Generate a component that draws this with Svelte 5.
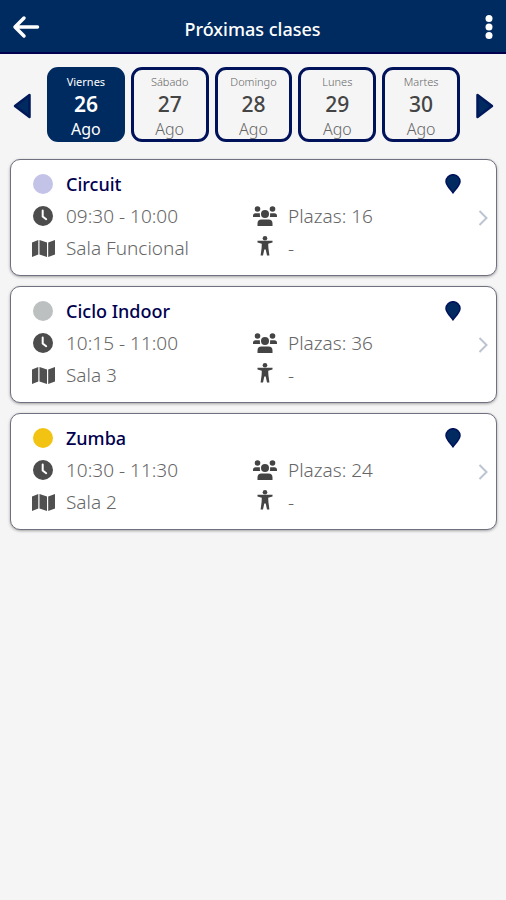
<script>
let days = $state([
     { name: "Viernes", num: 26, month: "Ago" },
     { name: "Sábado", num: 27, month: "Ago" },
     { name: "Domingo", num: 28, month: "Ago" },
     { name: "Lunes", num: 29, month: "Ago" },
     { name: "Martes", num: 30, month: "Ago" }
])

let selected = $state(0)

let classes = [
     { name: "Circuit", color: "#c3c3e8", time: "09:30 - 10:00", room: "Sala Funcional", places: 16, coach: "-" },
     { name: "Ciclo Indoor", color: "#bdc0c0", time: "10:15 - 11:00", room: "Sala 3", places: 36, coach: "-" },
     { name: "Zumba", color: "#f3c313", time: "10:30 - 11:30", room: "Sala 2", places: 24, coach: "-" }
]

function prevDay(){
     if(selected > 0){
          selected--
     }
}

function nextDay(){
     if(selected < days.length - 1){
          selected++
     }
}
</script>

<header>
     <button class="iconButton" type="button" aria-label="Volver">
          <svg width="28" height="24" viewBox="0 0 28 24" fill="none" stroke="#fff" stroke-width="3.500" stroke-linecap="round" stroke-linejoin="round"><path d="M12 3 3 12l9 9M4 12h21.500"/></svg>
     </button>
     <h1>Próximas clases</h1>
     <button class="iconButton menuButton" type="button" aria-label="Menú">
          <svg width="8" height="26" viewBox="0 0 8 26" fill="#fff"><circle cx="4" cy="4.500" r="3.500"/><circle cx="4" cy="13" r="3.500"/><circle cx="4" cy="21.500" r="3.500"/></svg>
     </button>
</header>

<nav class="days">
     <button class="arrow" type="button" aria-label="Día anterior" onclick={() => prevDay()}>
          <svg width="18" height="26" viewBox="0 0 18 26"><path d="M16.500 2v22L2 13z" fill="#002a60" stroke="#00195a" stroke-width="2.500" stroke-linejoin="round"/></svg>
     </button>
     {#each days as day, index}
     <button class={index == selected ? "day dayOn" : "day"} type="button" onclick={() => selected = index}>
          <span class="dayName">{day.name}</span>
          <span class="dayNum">{day.num}</span>
          <span class="dayMonth">{day.month}</span>
     </button>
     {/each}
     <button class="arrow" type="button" aria-label="Día siguiente" onclick={() => nextDay()}>
          <svg width="18" height="26" viewBox="0 0 18 26"><path d="M1.500 2v22L16 13z" fill="#002a60" stroke="#00195a" stroke-width="2.500" stroke-linejoin="round"/></svg>
     </button>
</nav>

<main>
     {#each classes as item}
     <article class="card">
          <div class="info">
               <div class="row">
                    <span class="icon"><span class="dot" style:background-color={item.color}></span></span>
                    <h2>{item.name}</h2>
               </div>
               <div class="row pinRow">
                    <svg width="16" height="20" viewBox="0 0 16 20"><path d="M8 19C6.500 16.300 1 11.500 1 7.500a7 6.800 0 0 1 14 0C15 11.500 9.500 16.300 8 19z" fill="#002a60" stroke="#00125a" stroke-width="1.500" stroke-linejoin="round"/></svg>
               </div>
               <div class="row">
                    <span class="icon">
                         <svg width="20" height="20" viewBox="0 0 20 20"><circle cx="10" cy="10" r="10" fill="#4c4c4c"/><path d="M9.700 4.500v6l3.500 2.700" fill="none" stroke="#fff" stroke-width="2" stroke-linecap="round"/></svg>
                    </span>
                    <span>{item.time}</span>
               </div>
               <div class="row">
                    <span class="icon">
                         <svg width="26" height="20" viewBox="0 0 26 20" fill="#444"><circle cx="5.500" cy="3" r="2.800"/><circle cx="20.500" cy="3" r="2.800"/><circle cx="13" cy="8" r="4"/><path d="M1 11V9.800Q1 7.200 3.600 7.200h3.300q.7 0 1.200.3Q7.600 9.200 8.200 11zM25 11V9.800q0-2.600-2.600-2.600h-3.300q-.7 0-1.200.3.500 1.700-.1 3.500zM5.500 20v-2.500q0-4 4-4h7q4 0 4 4V20z"/></svg>
                    </span>
                    <span>Plazas: {item.places}</span>
               </div>
               <div class="row">
                    <span class="icon">
                         <svg width="23" height="19" viewBox="0 0 23 19" fill="#505050"><path d="M0 3.500 6.300 1v14.500L0 18zM7.500 1l7.500 2.500V18l-7.500-2.500zM16.200 3.500 23 1v14.500L16.200 18z"/></svg>
                    </span>
                    <span>{item.room}</span>
               </div>
               <div class="row">
                    <span class="icon person">
                         <svg width="16" height="20" viewBox="0 0 16 20" fill="#444"><circle cx="8" cy="2.300" r="2.300"/><path d="M.5 4.800h15v1.700l-4.300 1.300.2 4.200 1 7.500H10l-1.300-6H7.300l-1.300 6H3.600l1-7.500.2-4.200L.5 6.500z"/></svg>
                    </span>
                    <span>{item.coach}</span>
               </div>
          </div>
          <button class="more" type="button" aria-label="Ver {item.name}">
               <svg width="10" height="16" viewBox="0 0 10 16" fill="none" stroke="#bcc4d2" stroke-width="2"><path d="m1.500 1 7 7-7 7"/></svg>
          </button>
     </article>
     {/each}
</main>

<style>
     :global(body){
          background-color: #f5f5f5;
          font-family: "Noto Sans", "Open Sans", sans-serif;
          color: #666;
     }

     button{
          margin: 0;
          padding: 0;
          border: none;
          background: none;
          font-family: inherit;
          color: inherit;
          cursor: pointer;
     }

     svg{
          display: block;
     }

     header{
          display: flex;
          align-items: center;
          justify-content: space-between;
          padding: 14px 13px 12px 12px;
          background-color: #002b60;
          border-bottom: 2px solid #00004f;
     }

     h1{
          margin: 0;
          padding-top: 4px;
          color: #fff;
          font-size: 18px;
          font-weight: 500;
          line-height: 22px;
     }

     .iconButton{
          display: flex;
          width: 28px;
     }

     .menuButton{
          justify-content: flex-end;
     }

     .days{
          display: flex;
          align-items: center;
          gap: 6px;
          padding: 13px 12px 17px 13px;
     }

     .arrow{
          flex: none;
          width: 28px;
          padding-top: 3px;
     }

     .arrow:last-child{
          display: flex;
          justify-content: flex-end;
     }

     .day{
          flex: 1;
          display: flex;
          flex-direction: column;
          align-items: center;
          height: 75px;
          box-sizing: border-box;
          padding-top: 3px;
          border: 3px solid #00125a;
          border-radius: 11px;
     }

     .dayOn{
          background-color: #002b60;
          border-color: #002b60;
          color: #fff;
     }

     .dayName{
          font-size: 11px;
          font-weight: 300;
          line-height: 17px;
     }

     .dayNum{
          font-size: 21px;
          font-weight: 500;
          line-height: 28px;
          color: #444;
     }

     .dayMonth{
          font-size: 16px;
          font-weight: 300;
          line-height: 22px;
     }

     .dayOn .dayName,
     .dayOn .dayMonth{
          font-weight: 400;
     }

     .dayOn .dayNum{
          color: #fff;
          font-weight: 600;
     }

     main{
          display: flex;
          flex-direction: column;
          gap: 10px;
          padding: 0 9px 10px 10px;
     }

     .card{
          display: flex;
          align-items: center;
          padding: 8px 8px 11px 19px;
          background-color: #fff;
          border: 1px solid #6f7080;
          border-radius: 10px;
          box-shadow: 0 1px 3px rgba(0, 0, 0, 0.35);
     }

     .info{
          flex: 1;
          display: grid;
          grid-template-columns: 1fr 1fr;
     }

     .row{
          display: flex;
          align-items: center;
          gap: 10px;
          height: 32px;
          font-size: 19px;
          font-weight: 300;
     }

     .pinRow{
          justify-content: flex-end;
          padding-right: 13px;
     }

     .icon{
          display: flex;
          justify-content: center;
          width: 26px;
     }

     .dot{
          width: 20px;
          height: 20px;
          border-radius: 50%;
     }

     .person{
          padding-bottom: 4px;
     }

     h2{
          margin: 0;
          color: #00004f;
          font-size: 18px;
          font-weight: 500;
     }

     .more{
          width: 14px;
          display: flex;
          justify-content: flex-end;
          padding-top: 3px;
     }
</style>
